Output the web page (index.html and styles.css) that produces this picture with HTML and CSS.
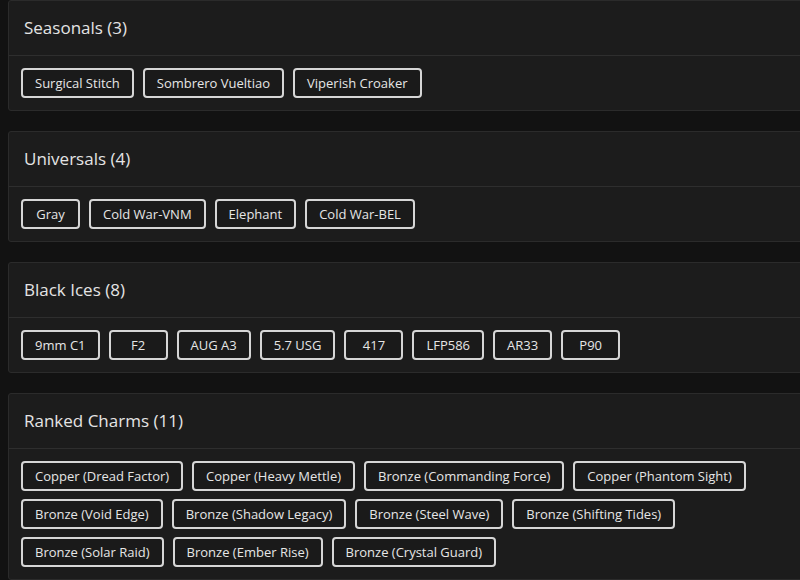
FILE: index.html
```html
<!DOCTYPE html>
<html>
<head>
<meta charset="utf-8">
<link rel="stylesheet" href="styles.css">
</head>
<body>
<div class="page">
  <section class="card">
    <div class="card-head"><h2>Seasonals (3)</h2></div>
    <div class="card-body">
      <span class="chip">Surgical Stitch</span>
      <span class="chip">Sombrero Vueltiao</span>
      <span class="chip">Viperish Croaker</span>
    </div>
  </section>
  <section class="card">
    <div class="card-head"><h2>Universals (4)</h2></div>
    <div class="card-body">
      <span class="chip">Gray</span>
      <span class="chip">Cold War-VNM</span>
      <span class="chip">Elephant</span>
      <span class="chip">Cold War-BEL</span>
    </div>
  </section>
  <section class="card">
    <div class="card-head"><h2>Black Ices (8)</h2></div>
    <div class="card-body">
      <span class="chip">9mm C1</span>
      <span class="chip">F2</span>
      <span class="chip">AUG A3</span>
      <span class="chip">5.7 USG</span>
      <span class="chip">417</span>
      <span class="chip">LFP586</span>
      <span class="chip">AR33</span>
      <span class="chip">P90</span>
    </div>
  </section>
  <section class="card">
    <div class="card-head"><h2>Ranked Charms (11)</h2></div>
    <div class="card-body">
      <span class="chip">Copper (Dread Factor)</span>
      <span class="chip">Copper (Heavy Mettle)</span>
      <span class="chip">Bronze (Commanding Force)</span>
      <span class="chip">Copper (Phantom Sight)</span>
      <span class="chip">Bronze (Void Edge)</span>
      <span class="chip">Bronze (Shadow Legacy)</span>
      <span class="chip">Bronze (Steel Wave)</span>
      <span class="chip">Bronze (Shifting Tides)</span>
      <span class="chip">Bronze (Solar Raid)</span>
      <span class="chip">Bronze (Ember Rise)</span>
      <span class="chip">Bronze (Crystal Guard)</span>
    </div>
  </section>
</div>
</body>
</html>
```
FILE: styles.css
```css
html, body {
  margin: 0;
  padding: 0;
  background: #121212;
  overflow: hidden;
}
body {
  font-family: "Open Sans", "Liberation Sans", sans-serif;
  color: #e2e2e2;
}
.page {
  width: 840px;
  padding-left: 8px;
  display: flex;
  flex-direction: column;
  gap: 20px;
}
.card {
  background: #1c1c1c;
  border: 1px solid #2b2b2b;
  border-radius: 3px;
}
.card-head {
  height: 55px;
  box-sizing: border-box;
  display: flex;
  align-items: center;
  padding-left: 15px;
  padding-bottom: 2px;
  border-bottom: 1px solid #2e2e2e;
}
.card-head h2 {
  margin: 0;
  font-size: 17px;
  font-weight: 500;
  color: #e4e4e4;
}
.card-body {
  padding: 12px 13px 12px 12px;
  display: flex;
  flex-wrap: wrap;
  gap: 8px 9px;
  width: 790px;
  box-sizing: border-box;
}
.chip {
  display: inline-flex;
  align-items: center;
  justify-content: center;
  min-width: 59px;
  height: 30px;
  box-sizing: border-box;
  padding: 0 12px;
  border: 2px solid #d6d6d6;
  border-radius: 4px;
  font-size: 13px;
  color: #e6e6e6;
  background: #1a1a1a;
  white-space: nowrap;
}
```
